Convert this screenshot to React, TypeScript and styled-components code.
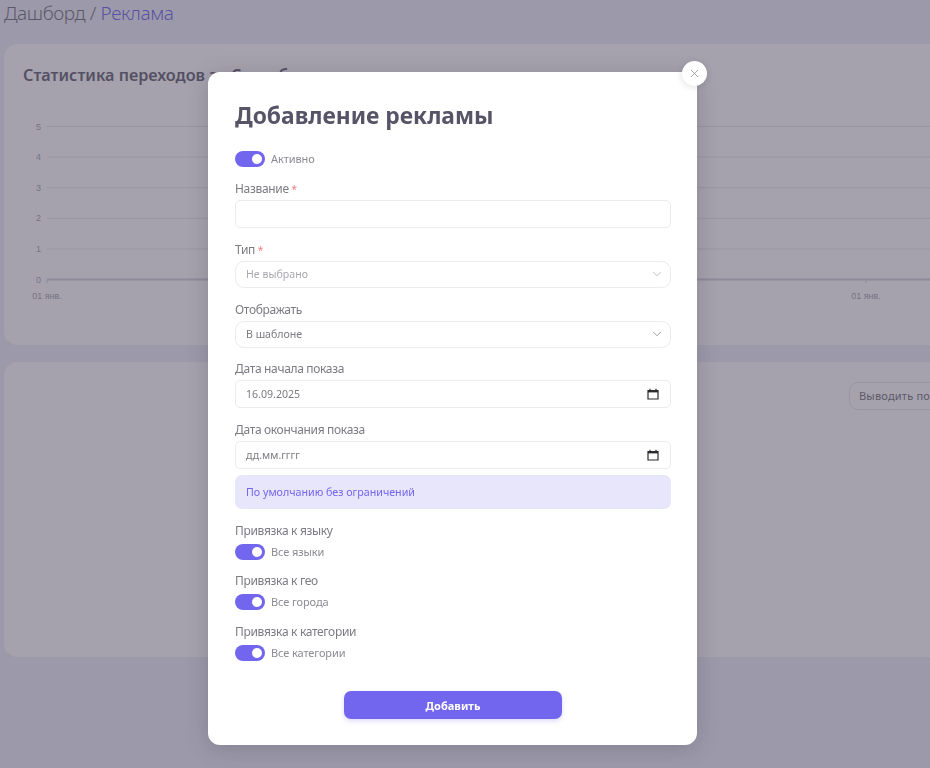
import { FC } from 'react'
import styled, { createGlobalStyle } from 'styled-components'
import { ChevronDown, X } from 'lucide-react'

const GlobalStyle = createGlobalStyle`
  html, body {
    margin: 0;
    height: 100%;
    overflow: hidden;
    background: #edeff9;
  }

  body, input, button {
    font-family: 'Noto Sans', 'Open Sans', sans-serif;
  }
`

const CalendarIcon: FC = () => (
  <svg width="12" height="12" viewBox="0 0 12 12" fill="none">
    <path d="M1 2.5h10v8.5H1z" stroke="#2b2b2f" strokeWidth="1.2" />
    <path d="M1 2h10v2.4H1z" fill="#2b2b2f" />
    <path d="M3 .8v2M9 .8v2" stroke="#2b2b2f" strokeWidth="1.2" />
  </svg>
)

const Chart: FC = () => {
  const rows = [5, 4, 3, 2, 1, 0]
  return (
    <ChartSvg width="1000" height="200" viewBox="0 0 1000 200">
      {rows.map((value, i) => {
        const y = 15.5 + i * 30.6
        return (
          <g key={value}>
            <line x1="39" x2="1000" y1={y} y2={y} stroke={value === 0 ? '#d0d0d8' : '#e6e6ec'} strokeWidth={value === 0 ? 2 : 1} />
            <text x="33" y={y + 3} textAnchor="end" fontSize="9" fill="#a0a0a8" fontFamily="'Liberation Sans', sans-serif">
              {value}
            </text>
          </g>
        )
      })}
      <line x1="39" x2="39" y1="168" y2="172" stroke="#d0d0d8" />
      <line x1="858" x2="858" y1="168" y2="172" stroke="#d0d0d8" />
      <text x="39" y="188" textAnchor="middle" fontSize="9" fill="#a0a0a8" fontFamily="'Liberation Sans', sans-serif">01 янв.</text>
      <text x="858" y="188" textAnchor="middle" fontSize="9" fill="#a0a0a8" fontFamily="'Liberation Sans', sans-serif">01 янв.</text>
    </ChartSvg>
  )
}

const Toggle: FC<{ label: string }> = ({ label }) => (
  <ToggleRow>
    <Track>
      <Knob />
    </Track>
    <ToggleLabel>{label}</ToggleLabel>
  </ToggleRow>
)

const App: FC = () => {
  return (
    <>
      <GlobalStyle />
      <Page>
        <Crumbs>
          Дашборд / <CrumbActive>Реклама</CrumbActive>
        </Crumbs>
        <ChartCard>
          <CardTitle>Статистика переходов за Сентябрь</CardTitle>
          <Chart />
        </ChartCard>
        <TableCard>
          <PerPage>Выводить по 10</PerPage>
        </TableCard>
      </Page>

      <Overlay>
        <Modal>
          <CloseButton>
            <X size={13} strokeWidth={1.4} color="#8b8b93" />
          </CloseButton>
          <Title>Добавление рекламы</Title>
          <ActiveRow>
            <Toggle label="Активно" />
          </ActiveRow>

          <Field>
            <Label>
              Название <Req>*</Req>
            </Label>
            <Input type="text" />
          </Field>
          <Field>
            <Label>
              Тип <Req>*</Req>
            </Label>
            <Control $round>
              <ControlText $muted>Не выбрано</ControlText>
              <ChevronDown size={14} strokeWidth={1} color="#9b9ba3" />
            </Control>
          </Field>
          <Field>
            <Label>Отображать</Label>
            <Control $round>
              <ControlText>В шаблоне</ControlText>
              <ChevronDown size={14} strokeWidth={1.2} color="#77777f" />
            </Control>
          </Field>
          <Field>
            <Label>Дата начала показа</Label>
            <Control>
              <ControlText>16.09.2025</ControlText>
              <CalendarIcon />
            </Control>
          </Field>
          <Field $tight>
            <Label>Дата окончания показа</Label>
            <Control>
              <ControlText>дд.мм.гггг</ControlText>
              <CalendarIcon />
            </Control>
          </Field>
          <Notice>По умолчанию без ограничений</Notice>

          <Binding>
            <BindingLabel>Привязка к языку</BindingLabel>
            <Toggle label="Все языки" />
          </Binding>
          <Binding>
            <BindingLabel>Привязка к гео</BindingLabel>
            <Toggle label="Все города" />
          </Binding>
          <Binding>
            <BindingLabel>Привязка к категории</BindingLabel>
            <Toggle label="Все категории" />
          </Binding>

          <Footer>
            <SubmitButton>Добавить</SubmitButton>
          </Footer>
        </Modal>
      </Overlay>
    </>
  )
}

const Page = styled.div`
  width: 1000px;
  padding-left: 4px;
`

const Crumbs = styled.div`
  height: 46px;
  margin-top: -2px;
  font-size: 19px;
  font-weight: 300;
  line-height: 30px;
  letter-spacing: -0.4px;
  color: #6d6b75;
`

const CrumbActive = styled.span`
  color: #6a5de8;
`

const ChartCard = styled.section`
  height: 301px;
  box-sizing: border-box;
  padding: 19px 0 0 19px;
  border-radius: 14px;
  background: #fff;
`

const CardTitle = styled.h2`
  margin: 0;
  font-size: 16.2px;
  font-weight: 600;
  line-height: 24px;
  color: #5d5b6b;
`

const ChartSvg = styled.svg`
  display: block;
  margin: 24px 0 0 -15px;
`

const TableCard = styled.section`
  height: 295px;
  box-sizing: border-box;
  margin-top: 17px;
  padding: 20px;
  display: flex;
  justify-content: flex-end;
  align-items: flex-start;
  border-radius: 14px;
  background: #fff;
`

const PerPage = styled.div`
  width: 135px;
  height: 28px;
  box-sizing: border-box;
  padding-left: 9px;
  border: 1px solid #e6e6ec;
  border-radius: 9px;
  font-size: 11px;
  line-height: 26px;
  letter-spacing: 0.2px;
  color: #6d6b75;
  white-space: nowrap;
`

const Overlay = styled.div`
  position: fixed;
  inset: 0;
  background: rgba(75, 69, 91, 0.5);
`

const Modal = styled.div`
  position: relative;
  width: 489px;
  height: 673px;
  box-sizing: border-box;
  margin: 72px 0 0 208px;
  padding: 29px 26px 0 27px;
  border-radius: 12px;
  background: #fff;
  box-shadow: 0 4px 22px rgba(40, 36, 60, 0.22);
`

const CloseButton = styled.button`
  position: absolute;
  top: -11px;
  right: -10px;
  width: 25px;
  height: 25px;
  padding: 0;
  display: flex;
  align-items: center;
  justify-content: center;
  border: 0;
  border-radius: 50%;
  background: #fff;
  box-shadow: 0 1px 6px rgba(40, 36, 60, 0.15);
`

const Title = styled.h1`
  margin: 0;
  font-size: 22.8px;
  font-weight: 700;
  line-height: 29px;
  color: #565466;
`

const ActiveRow = styled.div`
  margin: 21px 0 13px;
`

const ToggleRow = styled.div`
  display: flex;
  align-items: center;
  gap: 6px;
`

const Track = styled.div`
  width: 30px;
  height: 16px;
  box-sizing: border-box;
  padding: 3px;
  display: flex;
  justify-content: flex-end;
  border-radius: 8px;
  background: #7266ee;
`

const Knob = styled.div`
  width: 10px;
  height: 10px;
  border-radius: 50%;
  background: #fff;
`

const ToggleLabel = styled.span`
  font-size: 11px;
  line-height: 16px;
  letter-spacing: -0.1px;
  color: #8b8b93;
`

const Field = styled.div<{ $tight?: boolean }>`
  margin-bottom: ${({ $tight }) => ($tight ? '6px' : '12.75px')};
`

const Label = styled.div`
  margin-bottom: 3px;
  font-size: 12px;
  line-height: 17px;
  letter-spacing: -0.33px;
  color: #7b7b83;
`

const BindingLabel = styled(Label)`
  margin-bottom: 5px;
`

const Req = styled.span`
  font-size: 10px;
  line-height: 0;
  color: #ee7f7f;
`

const Input = styled.input`
  display: block;
  width: 100%;
  height: 28px;
  box-sizing: border-box;
  border: 1px solid #ebebf0;
  border-radius: 5px;
  outline: none;
`

const Control = styled.div<{ $round?: boolean }>`
  height: ${({ $round }) => ($round ? '27px' : '28px')};
  box-sizing: border-box;
  padding: 0 ${({ $round }) => ($round ? '6px' : '11px')} 1px 10px;
  display: flex;
  align-items: center;
  justify-content: space-between;
  border: 1px solid #ebebf0;
  border-radius: ${({ $round }) => ($round ? '9px' : '5px')};
`

const ControlText = styled.span<{ $muted?: boolean }>`
  font-size: 10.6px;
  color: ${({ $muted }) => ($muted ? '#a8a8b0' : '#7b7b83')};
`

const Notice = styled.div`
  height: 34px;
  box-sizing: border-box;
  margin-bottom: 12.5px;
  padding-left: 11px;
  border-radius: 7px;
  background: #e8e6fb;
  font-size: 10.7px;
  line-height: 34px;
  color: #7266ee;
`

const Binding = styled.div`
  margin-bottom: 12.5px;
`

const Footer = styled.div`
  margin-top: 30.5px;
  display: flex;
  justify-content: center;
`

const SubmitButton = styled.button`
  width: 218px;
  height: 28px;
  padding: 0;
  border: 0;
  border-radius: 7px;
  background: #7266ee;
  box-shadow: 0 2px 5px rgba(114, 102, 238, 0.25);
  font-size: 11px;
  font-weight: 700;
  color: #fff;
`

export default App
